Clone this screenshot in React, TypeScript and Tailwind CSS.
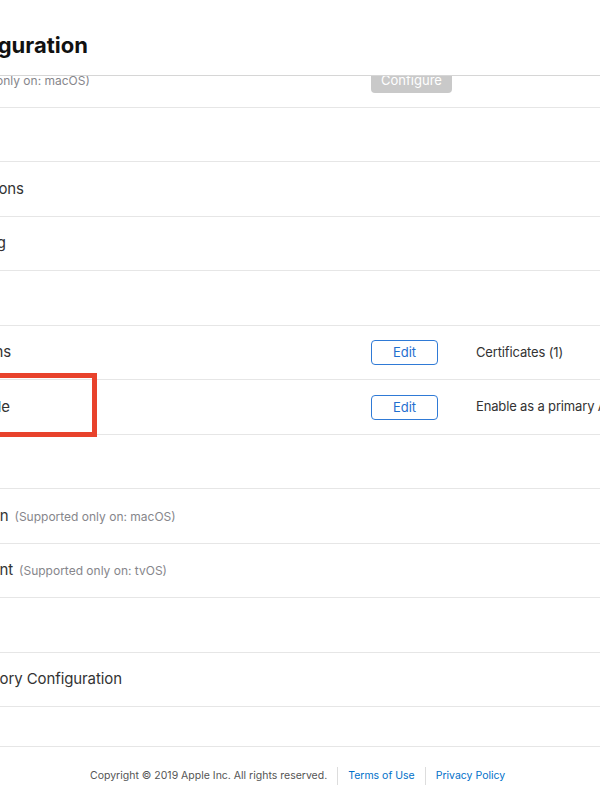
import React from "react";

type Capability = {
  label: string;
  note?: string;
  action?: "Edit" | "Configure";
  info?: string;
  highlight?: boolean;
};

const capabilities: Capability[] = [
  { label: "Maps", note: "(Supported only on: macOS)", action: "Configure" },
  { label: "Multipath" },
  { label: "Network Extensions" },
  { label: "NFC Tag Reading" },
  { label: "Personal VPN" },
  { label: "Push Notifications", action: "Edit", info: "Certificates (1)" },
  {
    label: "Sign In with Apple",
    action: "Edit",
    info: "Enable as a primary App ID",
    highlight: true,
  },
  { label: "SiriKit" },
  { label: "System Extension", note: "(Supported only on: macOS)" },
  { label: "User Management", note: "(Supported only on: tvOS)" },
  { label: "Wallet" },
  { label: "Wireless Accessory Configuration" },
];

function ActionButton({ kind }: { kind: "Edit" | "Configure" }) {
  if (kind === "Configure") {
    return (
      <span className="inline-flex h-[25px] w-[81px] items-center justify-center rounded-[4px] bg-[#c9c9c9] text-[13px] text-white">
        Configure
      </span>
    );
  }

  return (
    <span className="inline-flex h-[25px] w-[67px] items-center justify-center rounded-[4px] border border-[#2f7ad6] text-[13px] text-[#1f6fcf]">
      Edit
    </span>
  );
}

function CapabilityRow({ item }: { item: Capability }) {
  return (
    <div className="relative grid h-[54.5px] grid-cols-[487px_105px_1fr] items-center border-b border-[#e6e6e6] whitespace-nowrap">
      <div className="flex items-baseline gap-[6px]">
        <span className="text-[15px] tracking-[-0.1px] text-[#333333]">
          {item.label}
        </span>
        {item.note ? (
          <span className="text-[12px] text-[#86868b]">{item.note}</span>
        ) : null}
      </div>
      <div>{item.action ? <ActionButton kind={item.action} /> : null}</div>
      <div className="text-[13px] tracking-[-0.15px] text-[#333333]">
        {item.info}
      </div>

      {item.highlight ? (
        <div className="absolute -top-[7px] -bottom-[3px] left-[-20px] w-[233px] border-[5px] border-[#e8422c]" />
      ) : null}
    </div>
  );
}

export default function App() {
  return (
    <div className="relative h-[800px] w-[600px] overflow-hidden bg-white font-['Inter',sans-serif]">
      <header className="absolute inset-x-0 top-0 z-10 h-[76px] border-b border-[#d6d6d6] bg-white">
        <h1 className="-ml-[238px] pt-[31px] text-[22px] font-bold leading-[28px] whitespace-nowrap text-[#111111]">
          Edit your App ID Configuration
        </h1>
      </header>

      <div className="-ml-[116px] w-[770px] pt-[53px]">
        {capabilities.map((item) => (
          <CapabilityRow key={item.label} item={item} />
        ))}
      </div>

      <footer className="mt-[39px] flex items-center border-t border-[#e6e6e6] pt-[20px] pl-[90px] text-[10.5px] leading-[18px] whitespace-nowrap">
        <span className="pr-[10px] text-[#555555]">
          Copyright © 2019 Apple Inc. All rights reserved.
        </span>
        <span className="border-l border-[#dddddd] px-[10px] text-[#0070c9]">
          Terms of Use
        </span>
        <span className="border-l border-[#dddddd] px-[10px] text-[#0070c9]">
          Privacy Policy
        </span>
      </footer>
    </div>
  );
}
